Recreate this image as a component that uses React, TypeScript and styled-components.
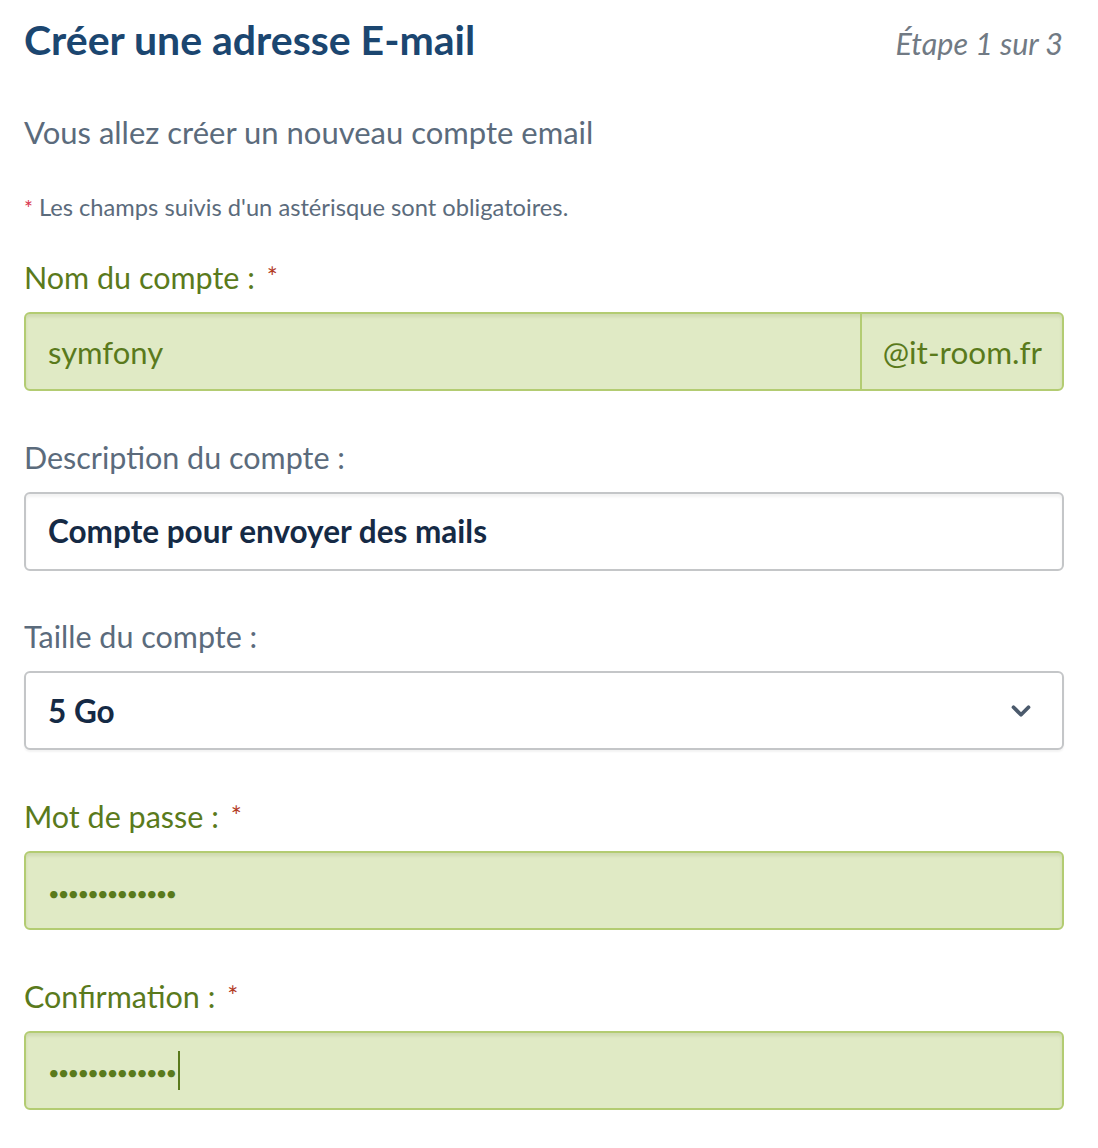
import * as React from "react";
import styled, { createGlobalStyle } from "styled-components";
import { ChevronDown } from "lucide-react";

const GlobalStyle = createGlobalStyle`
    html, body {
        margin: 0;
        padding: 0;
        background: #ffffff;
    }
    body {
        font-family: "Lato", "Noto Sans", sans-serif;
    }
`;

const Page = styled.div`
    width: 1040px;
    padding: 14px 0 0 24px;
    display: flex;
    flex-direction: column;
`;

const Header = styled.div`
    display: flex;
    justify-content: space-between;
    align-items: baseline;
`;

const Title = styled.h1`
    margin: 0;
    font-size: 41px;
    font-weight: 700;
    color: #1b4670;
    line-height: 52px;
`;

const Step = styled.span`
    font-size: 30.5px;
    font-style: italic;
    color: #717a84;
    margin-right: 1px;
`;

const Intro = styled.p`
    margin: 46px 0 0;
    font-size: 31px;
    line-height: 40px;
    color: #5b6b7c;
`;

const Notice = styled.p`
    margin: 41px 0 0;
    font-size: 23.7px;
    line-height: 28px;
    color: #5b6b7c;
`;

const NoticeStar = styled.span`
    color: #d9364e;
    margin-right: 6px;
    font-size: 21px;
`;

const Group = styled.div<{ $first?: boolean }>`
    display: flex;
    flex-direction: column;
    margin-top: ${(p) => (p.$first ? "35px" : "45.7px")};
`;

const Label = styled.label<{ $valid?: boolean }>`
    font-size: 30.5px;
    line-height: 40px;
    color: ${(p) => (p.$valid ? "#5a7a1c" : "#5b6b7c")};
    margin-bottom: 15px;
`;

const Required = styled.span`
    color: #b23a1f;
    margin-left: 12px;
    font-size: 26px;
    vertical-align: top;
`;

const Field = styled.div<{ $valid?: boolean }>`
    display: flex;
    align-items: stretch;
    height: 79px;
    box-sizing: border-box;
    border: 2px solid ${(p) => (p.$valid ? "#b3cc72" : "#c4c6c8")};
    border-radius: 6px;
    background: ${(p) => (p.$valid ? "#e0eac5" : "#ffffff")};
    box-shadow: inset 0 3px 3px ${(p) => (p.$valid ? "rgba(90, 110, 40, 0.12)" : "rgba(0, 0, 0, 0.05)")};
    overflow: hidden;
`;

const Value = styled.div<{ $tone: "valid" | "strong" }>`
    flex: 1;
    display: flex;
    align-items: center;
    padding-left: 22px;
    font-size: ${(p) => (p.$tone === "strong" ? "31.5px" : "31px")};
    font-weight: ${(p) => (p.$tone === "strong" ? 700 : 400)};
    color: ${(p) => (p.$tone === "strong" ? "#152a45" : "#5a7a1c")};
`;

const Addon = styled.div`
    display: flex;
    align-items: center;
    padding: 0 20px 0 21px;
    border-left: 2px solid #b3cc72;
    font-size: 31.5px;
    color: #5a7a1c;
`;

const Dots = styled.span`
    font-size: 20px;
    letter-spacing: -1.8px;
    color: #5a7a1c;
    padding-top: 4px;
`;

const Caret = styled.span`
    display: inline-block;
    width: 2px;
    height: 39px;
    background: #5a7a1c;
    margin-left: 3px;
`;

const Select = styled(Field)`
    justify-content: space-between;
    align-items: center;
    padding-right: 26px;
    box-shadow: 0 2px 2px rgba(0, 0, 0, 0.05);
`;

export default function App(): JSX.Element {
    const dots = "•".repeat(13);
    return (
        <>
            <GlobalStyle />
            <Page>
                <Header>
                    <Title>Créer une adresse E-mail</Title>
                    <Step>Étape 1 sur 3</Step>
                </Header>
                <Intro>Vous allez créer un nouveau compte email</Intro>
                <Notice>
                    <NoticeStar>*</NoticeStar>Les champs suivis d'un astérisque sont obligatoires.
                </Notice>

                <Group $first>
                    <Label $valid>
                        Nom du compte :<Required>*</Required>
                    </Label>
                    <Field $valid>
                        <Value $tone="valid">symfony</Value>
                        <Addon>@it-room.fr</Addon>
                    </Field>
                </Group>

                <Group>
                    <Label>Description du compte :</Label>
                    <Field>
                        <Value $tone="strong">Compte pour envoyer des mails</Value>
                    </Field>
                </Group>

                <Group>
                    <Label>Taille du compte :</Label>
                    <Select>
                        <Value $tone="strong">5 Go</Value>
                        <ChevronDown size={30} strokeWidth={3} color="#4b5a6c" />
                    </Select>
                </Group>

                <Group>
                    <Label $valid>
                        Mot de passe :<Required>*</Required>
                    </Label>
                    <Field $valid>
                        <Value $tone="valid">
                            <Dots>{dots}</Dots>
                        </Value>
                    </Field>
                </Group>

                <Group>
                    <Label $valid>
                        Confirmation :<Required>*</Required>
                    </Label>
                    <Field $valid>
                        <Value $tone="valid">
                            <Dots>{dots}</Dots>
                            <Caret />
                        </Value>
                    </Field>
                </Group>
            </Page>
        </>
    );
}
